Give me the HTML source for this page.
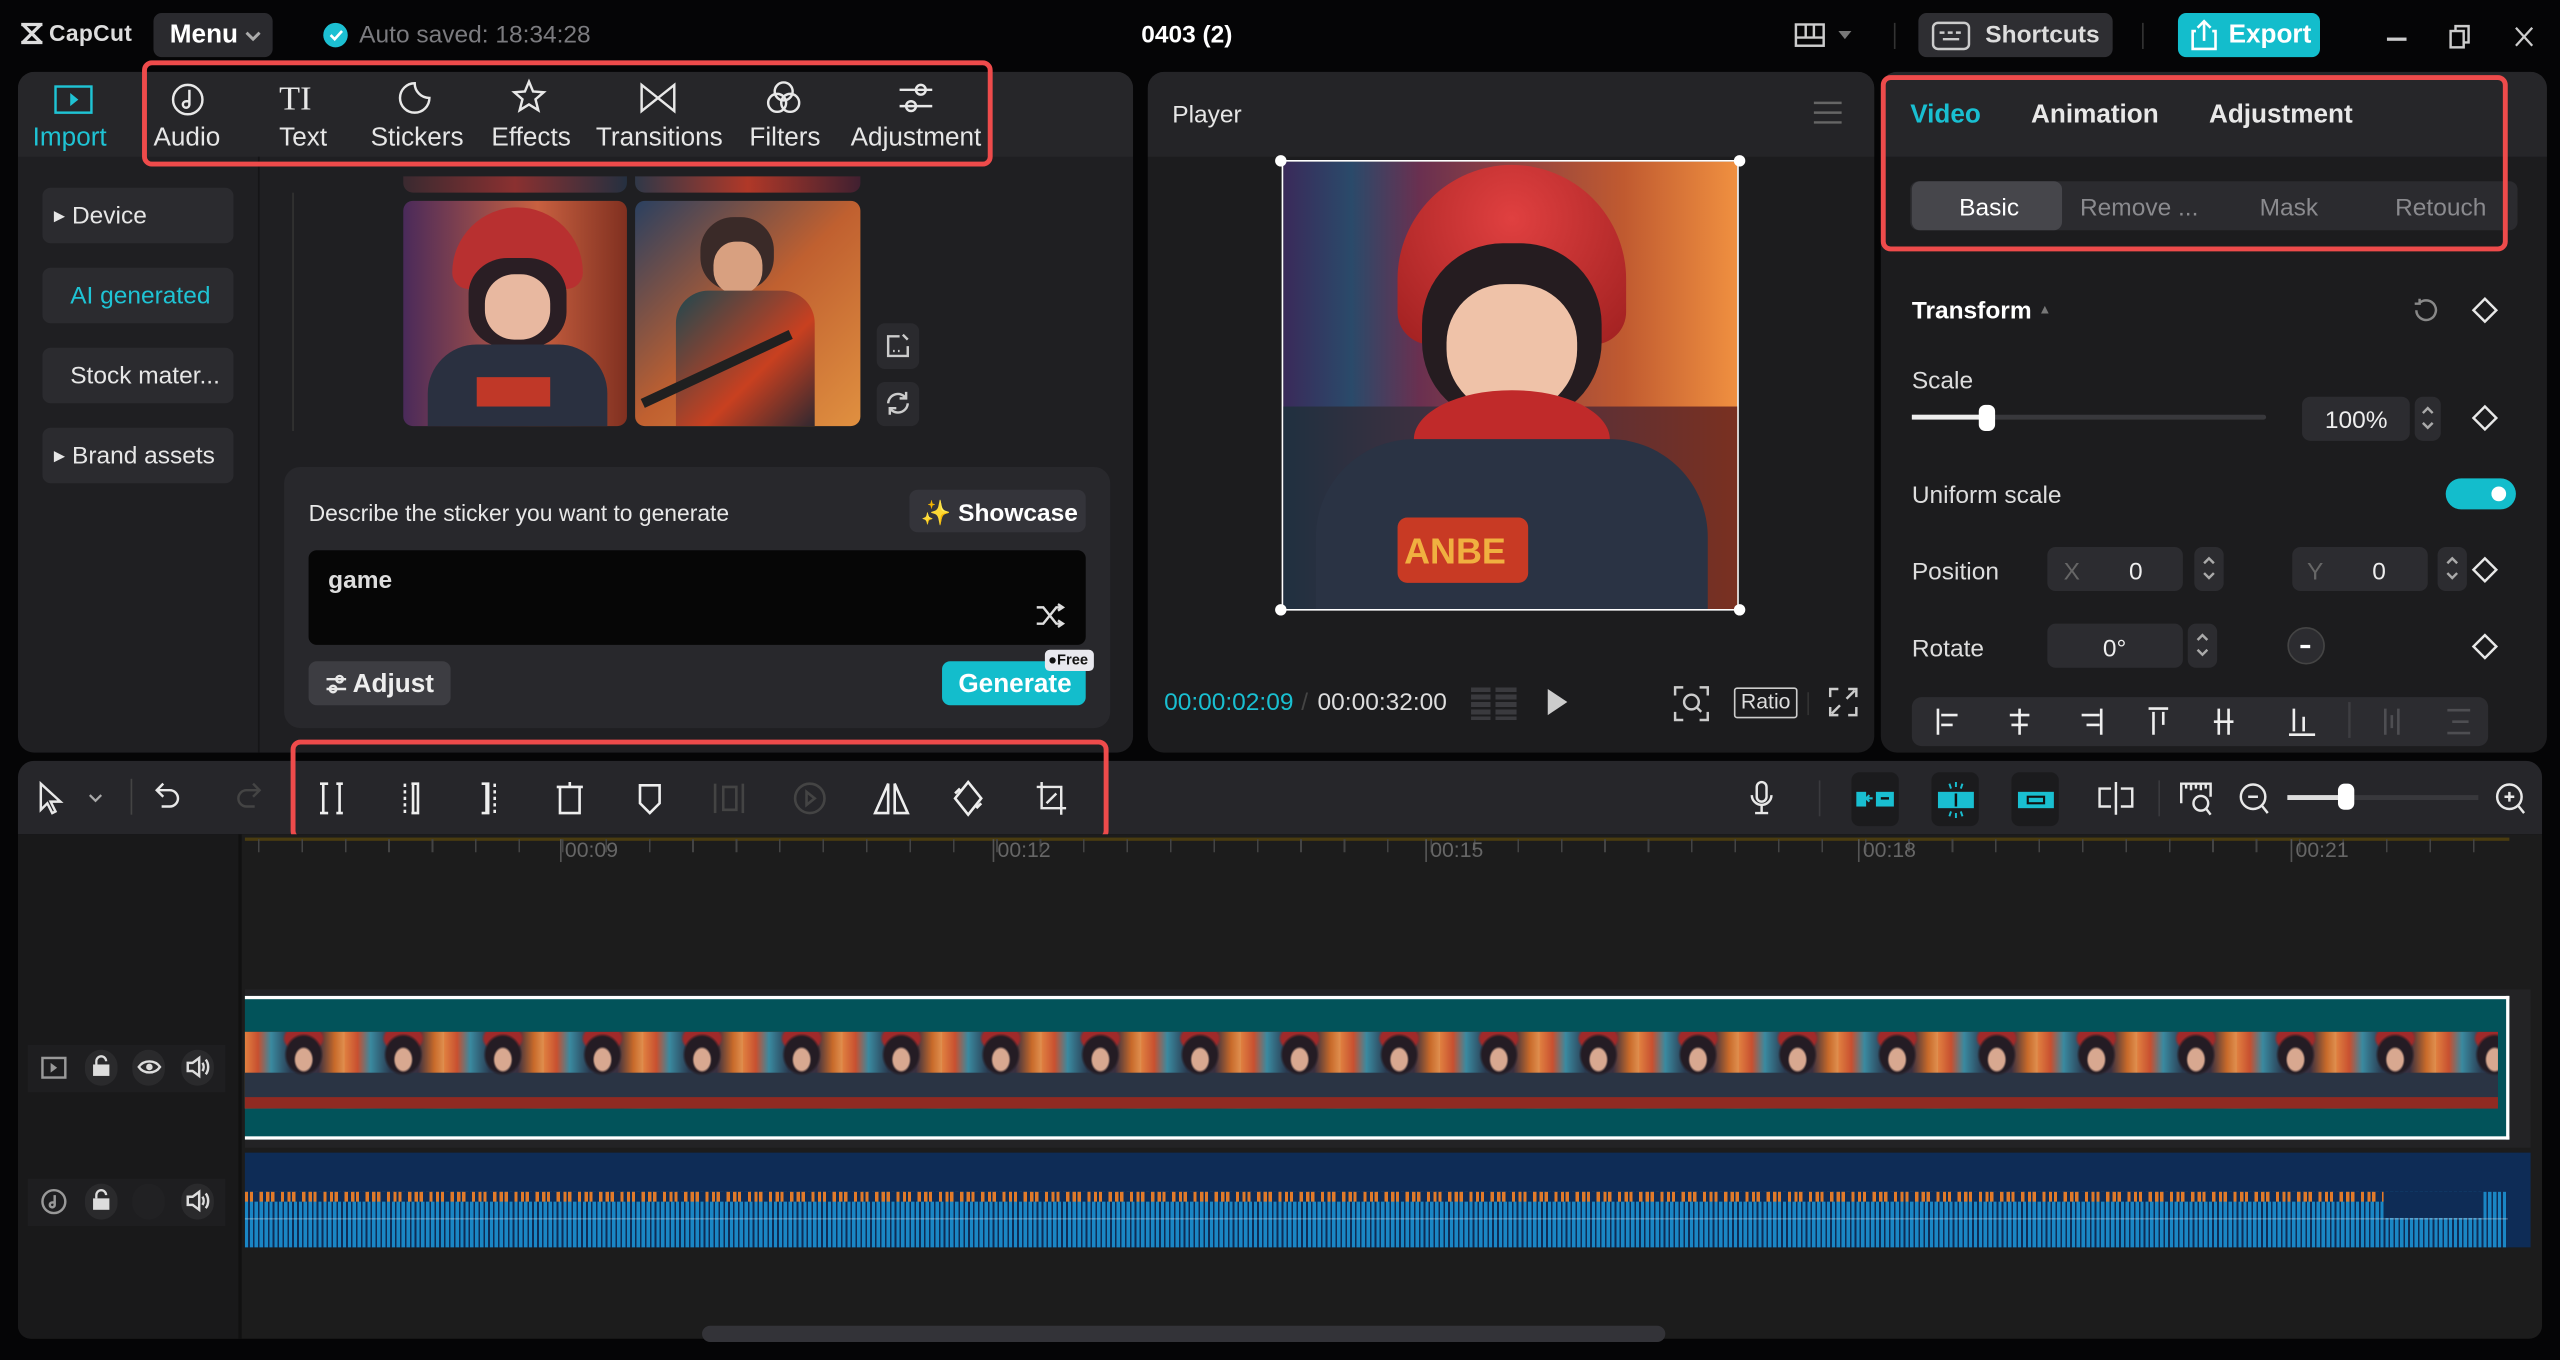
<!DOCTYPE html>
<html><head><meta charset="utf-8"><style>
*{margin:0;padding:0;box-sizing:border-box}
html,body{width:2560px;height:1360px;overflow:hidden;background:#050506}
#s{position:absolute;left:0;top:0;width:1568px;height:833px;transform:scale(1.632653);transform-origin:0 0;font-family:"Liberation Sans",sans-serif;color:#e6e6e6;background:#050506}
.a{position:absolute}
.t{position:absolute;white-space:nowrap}
.red{position:absolute;border:3px solid #ee4b4b;border-radius:6px}
svg{position:absolute;overflow:visible}
.ic{fill:none;stroke-width:1.5}
.ic:not([stroke]){stroke:#e8e8e8}
.btn{position:absolute;background:#2c2c30;border-radius:5px}
</style></head><body><div id="s">

<!-- title bar -->
<svg style="left:12px;top:14px" width="16" height="13" viewBox="0 0 16 13"><path d="M1 1h13M1 12h13M2 1l11 11M13 1L2 12" stroke="#ddd" stroke-width="2" fill="none"/></svg>
<div class="t" style="left:30px;top:12px;font-size:14px;color:#ddd;font-weight:bold;letter-spacing:.2px">CapCut</div>
<div class="btn" style="left:94px;top:8px;width:73px;height:27px;background:#2a2a2e"></div>
<div class="t" style="left:104px;top:13px;font-size:16px;font-weight:bold;color:#fff">Menu</div>
<svg style="left:150px;top:19px" width="10" height="6"><path d="M1 1l4 4 4-4" stroke="#aaa" stroke-width="1.8" fill="none"/></svg>
<div class="a" style="left:198px;top:14px;width:15px;height:15px;border-radius:50%;background:#1cc0d2"></div>
<svg style="left:201px;top:17px" width="10" height="9"><path d="M1.5 4.5l2.5 2.5 4.5-5" stroke="#fff" stroke-width="1.6" fill="none"/></svg>
<div class="t" style="left:220px;top:13px;font-size:15px;color:#7b7b7f">Auto saved: 18:34:28</div>
<div class="t" style="left:699px;top:13px;font-size:15px;font-weight:bold;color:#fff">0403 (2)</div>
<svg style="left:1099px;top:14px" width="20" height="16"><rect x="1" y="1" width="17" height="13" class="ic" stroke="#ccc"/><path d="M1 9h17M7 1v8M12 1v8" class="ic" stroke="#ccc"/></svg>
<svg style="left:1126px;top:19px" width="8" height="6"><path d="M0 0h8L4 5z" fill="#777"/></svg>
<div class="a" style="left:1160px;top:14px;width:1px;height:16px;background:#333"></div>
<div class="btn" style="left:1175px;top:8px;width:119px;height:27px;background:#2e2e32"></div>
<svg style="left:1183px;top:13px" width="24" height="18"><rect x="1" y="1" width="22" height="16" rx="3" class="ic" stroke="#ccc"/><path d="M5 7h3M10 7h3M15 7h3M7 11h10" class="ic" stroke="#ccc"/></svg>
<div class="t" style="left:1216px;top:13px;font-size:15px;color:#ddd;font-weight:bold">Shortcuts</div>
<div class="a" style="left:1312px;top:14px;width:1px;height:16px;background:#333"></div>
<div class="btn" style="left:1334px;top:8px;width:87px;height:27px;background:#13bdcc"></div>
<svg style="left:1342px;top:12px" width="16" height="19"><path d="M3 7H1v11h14V7h-2M8 13V1M4 5l4-4 4 4" stroke="#fff" stroke-width="1.6" fill="none"/></svg>
<div class="t" style="left:1365px;top:13px;font-size:16px;color:#fff;font-weight:bold">Export</div>
<div class="a" style="left:1462px;top:23px;width:12px;height:1.5px;background:#ccc"></div>
<svg style="left:1500px;top:15px" width="14" height="15"><rect x="1" y="4" width="8" height="10" class="ic" stroke="#ccc"/><path d="M4 4V1h8v10H9" class="ic" stroke="#ccc"/></svg>
<svg style="left:1540px;top:16px" width="12" height="13"><path d="M1 1l10 11M11 1L1 12" stroke="#ccc" stroke-width="1.4"/></svg>

<!-- left panel -->
<div class="a" style="left:11px;top:44px;width:683px;height:417px;background:#1f1f22;border-radius:10px;overflow:hidden">
 <div class="a" style="left:0;top:0;width:683px;height:52px;background:#262629"></div>
 <div class="a" style="left:147px;top:52px;width:1px;height:365px;background:#151517"></div>
</div>
<svg style="left:33px;top:52px" width="24" height="19"><rect x="1" y="1" width="22" height="16" class="ic" stroke="#1fc3d4"/><path d="M10 5v8l5-4z" fill="#1fc3d4"/></svg>
<div class="t" style="left:20px;top:76px;font-size:16px;color:#1fc3d4">Import</div>
<svg style="left:103px;top:49px" width="24" height="24"><circle cx="12" cy="12" r="9" class="ic"/><path d="M13 6v9a2 2 0 1 1-2-2h2" class="ic"/></svg>
<div class="t" style="left:94px;top:76px;font-size:16px">Audio</div>
<div class="t" style="left:171px;top:48px;font-size:21px;font-family:'Liberation Serif',serif;color:#e8e8e8">TI</div>
<div class="t" style="left:171px;top:76px;font-size:16px">Text</div>
<svg style="left:243px;top:49px" width="22" height="22"><path d="M11 2a9 9 0 1 0 9 9c-5 0-9-4-9-9z" class="ic"/></svg>
<div class="t" style="left:227px;top:76px;font-size:16px">Stickers</div>
<svg style="left:312px;top:48px" width="24" height="24"><path d="M12 2l2.5 6 6.5.5-5 4.3 1.7 6.7L12 16l-5.7 3.5L8 12.8 3 8.5 9.5 8z" class="ic"/></svg>
<div class="t" style="left:301px;top:76px;font-size:16px">Effects</div>
<svg style="left:391px;top:50px" width="24" height="20"><path d="M2 2v16l10-8zM22 2v16L12 10z" class="ic"/></svg>
<div class="t" style="left:365px;top:76px;font-size:16px">Transitions</div>
<svg style="left:468px;top:48px" width="24" height="24"><circle cx="12" cy="8" r="5.5" class="ic"/><circle cx="8" cy="15" r="5.5" class="ic"/><circle cx="16" cy="15" r="5.5" class="ic"/></svg>
<div class="t" style="left:459px;top:76px;font-size:16px">Filters</div>
<svg style="left:549px;top:48px" width="24" height="24"><path d="M2 7h20M2 17h20" class="ic"/><circle cx="15" cy="7" r="3" fill="#262629" class="ic"/><circle cx="9" cy="17" r="3" fill="#262629" class="ic"/></svg>
<div class="t" style="left:521px;top:76px;font-size:16px">Adjustment</div>
<div class="red" style="left:87px;top:37px;width:521px;height:65px"></div>

<div class="btn" style="left:26px;top:115px;width:117px;height:34px;background:#2b2b2f"></div>
<div class="t" style="left:33px;top:124px;font-size:15px"><span style="font-size:9px;vertical-align:2px">▶</span> Device</div>
<div class="btn" style="left:26px;top:164px;width:117px;height:34px;background:#2b2b2f"></div>
<div class="t" style="left:43px;top:173px;font-size:15px;color:#1fc3d4">AI generated</div>
<div class="btn" style="left:26px;top:213px;width:117px;height:34px;background:#2b2b2f"></div>
<div class="t" style="left:43px;top:222px;font-size:15px">Stock mater...</div>
<div class="btn" style="left:26px;top:262px;width:117px;height:34px;background:#2b2b2f"></div>
<div class="t" style="left:33px;top:271px;font-size:15px"><span style="font-size:9px;vertical-align:2px">▶</span> Brand assets</div>

<div class="a" style="left:179px;top:118px;width:1px;height:146px;background:#333"></div>
<div class="a" style="left:247px;top:108px;width:137px;height:10px;background:linear-gradient(90deg,#3a2a30,#8a3030,#253040);border-radius:0 0 6px 6px"></div>
<div class="a" style="left:389px;top:108px;width:138px;height:10px;background:linear-gradient(90deg,#303848,#b03828,#402030);border-radius:0 0 6px 6px"></div>
<div class="a" style="left:247px;top:123px;width:137px;height:138px;border-radius:6px;overflow:hidden;background:linear-gradient(90deg,#4a2a5a,#c86040 60%,#803020)">
 <div class="a" style="left:30px;top:4px;width:80px;height:50px;border-radius:40px 40px 10px 10px;background:#b83030"></div>
 <div class="a" style="left:40px;top:35px;width:60px;height:55px;border-radius:40%;background:#2a1e24"></div>
 <div class="a" style="left:50px;top:45px;width:40px;height:40px;border-radius:45%;background:#e8b8a0"></div>
 <div class="a" style="left:15px;top:88px;width:110px;height:55px;border-radius:30px 30px 0 0;background:#2a3040"></div>
 <div class="a" style="left:45px;top:108px;width:45px;height:18px;background:#c03828"></div>
</div>
<div class="a" style="left:389px;top:123px;width:138px;height:138px;border-radius:6px;overflow:hidden;background:linear-gradient(135deg,#2a4060,#c06030 50%,#e09040)">
 <div class="a" style="left:40px;top:10px;width:45px;height:45px;border-radius:45%;background:#3a2a28"></div>
 <div class="a" style="left:48px;top:25px;width:30px;height:32px;border-radius:45%;background:#d8a080"></div>
 <div class="a" style="left:25px;top:55px;width:85px;height:83px;border-radius:20px 20px 0 0;background:linear-gradient(135deg,#1e4850,#c84020 60%,#302830)"></div>
 <div class="a" style="left:0;top:100px;width:100px;height:6px;background:#202020;transform:rotate(-25deg)"></div>
</div>
<div class="btn" style="left:537px;top:198px;width:26px;height:28px;background:#2a2a2e"></div>
<svg style="left:542px;top:204px" width="16" height="16"><path d="M14 8v6H2V2h7M11 1l3 3" class="ic" stroke="#ccc"/><path d="M5 11h1M8 11h1" stroke="#ccc" stroke-width="1.4"/></svg>
<div class="btn" style="left:537px;top:234px;width:26px;height:27px;background:#2a2a2e"></div>
<svg style="left:542px;top:239px" width="16" height="16"><path d="M2 8a6 6 0 0 1 11-3M14 8a6 6 0 0 1-11 3M13 1v4H9M3 15v-4h4" class="ic" stroke="#ccc"/></svg>

<div class="a" style="left:174px;top:286px;width:506px;height:160px;background:#28282c;border-radius:10px"></div>
<div class="t" style="left:189px;top:306px;font-size:14px;color:#e8e8e8">Describe the sticker you want to generate</div>
<div class="btn" style="left:557px;top:300px;width:108px;height:26px;background:#34343a"></div>
<div class="t" style="left:564px;top:305px;font-size:15px;font-weight:bold;color:#fff"><span style="color:#f5d142">✨</span> Showcase</div>
<div class="a" style="left:189px;top:337px;width:476px;height:58px;background:#060606;border-radius:5px"></div>
<div class="t" style="left:201px;top:347px;font-size:15px;font-weight:bold;color:#ddd">game</div>
<svg style="left:634px;top:369px" width="18" height="16"><path d="M1 3h4l8 10h4M1 13h4l8-10h4M14 1l3 2-3 2M14 11l3 2-3 2" class="ic" stroke="#ddd"/></svg>
<div class="btn" style="left:189px;top:405px;width:87px;height:27px;background:#3d3d42"></div>
<svg style="left:199px;top:413px" width="14" height="12"><path d="M1 3h12M1 9h12" class="ic"/><circle cx="9" cy="3" r="2" fill="#3d3d42" class="ic"/><circle cx="5" cy="9" r="2" fill="#3d3d42" class="ic"/></svg>
<div class="t" style="left:216px;top:411px;font-size:16px;font-weight:bold;color:#eee">Adjust</div>
<div class="btn" style="left:577px;top:405px;width:88px;height:27px;background:#13bdcc"></div>
<div class="t" style="left:587px;top:411px;font-size:16px;font-weight:bold;color:#fff">Generate</div>
<div class="a" style="left:640px;top:398px;width:30px;height:13px;background:#e8e8ee;border-radius:3px;font-size:9px;color:#111;font-weight:bold;line-height:13px;padding-left:2px">●Free</div>

<!-- player -->
<div class="a" style="left:703px;top:44px;width:445px;height:417px;background:#1c1c1e;border-radius:10px;overflow:hidden">
 <div class="a" style="left:0;top:0;width:445px;height:52px;background:#242427"></div>
</div>
<div class="t" style="left:718px;top:62px;font-size:15px;color:#e6e6e6">Player</div>
<svg style="left:1111px;top:62px" width="17" height="14"><path d="M0 1h17M0 7h17M0 13h17" stroke="#666" stroke-width="1.5"/></svg>
<div class="a" style="left:785px;top:98px;width:280px;height:276px;overflow:hidden;background:linear-gradient(90deg,#3a2a5a 0%,#2a4a6a 15%,#6a3050 30%,#c05a30 75%,#f09040 100%);border:1px solid #fff">
 <div class="a" style="left:0;top:150px;width:280px;height:130px;background:linear-gradient(90deg,#203040,#503040,#7a3020)"></div>
 <div class="a" style="left:70px;top:2px;width:140px;height:110px;border-radius:70px 70px 20px 20px;background:radial-gradient(circle at 50% 30%,#e04040,#a02020)"></div>
 <div class="a" style="left:85px;top:50px;width:110px;height:110px;border-radius:45%;background:#251c20"></div>
 <div class="a" style="left:100px;top:75px;width:80px;height:80px;border-radius:45% 45% 50% 50%;background:#efc2a8"></div>
 <div class="a" style="left:80px;top:140px;width:120px;height:60px;border-radius:50% 50% 0 0;background:#c02a2a"></div>
 <div class="a" style="left:20px;top:170px;width:240px;height:110px;border-radius:60px 60px 0 0;background:#2a3344"></div>
 <div class="a" style="left:70px;top:218px;width:80px;height:40px;background:#c83a24;border-radius:6px"></div>
 <div class="t" style="left:74px;top:226px;font-size:22px;font-weight:bold;color:#f0b040">ANBE</div>
</div>
<div class="a" style="left:781px;top:95px;width:7px;height:7px;background:#fff;border-radius:50%"></div>
<div class="a" style="left:1062px;top:95px;width:7px;height:7px;background:#fff;border-radius:50%"></div>
<div class="a" style="left:781px;top:370px;width:7px;height:7px;background:#fff;border-radius:50%"></div>
<div class="a" style="left:1062px;top:370px;width:7px;height:7px;background:#fff;border-radius:50%"></div>
<div class="t" style="left:713px;top:422px;font-size:15px;color:#19bfd1">00:00:02:09</div>
<div class="t" style="left:797px;top:422px;font-size:15px;color:#444">/</div>
<div class="t" style="left:807px;top:422px;font-size:15px;color:#ddd">00:00:32:00</div>
<div class="a" style="left:901px;top:421px;width:28px;height:20px;background:repeating-linear-gradient(180deg,#3a3a3e 0 3px,transparent 3px 4.5px);-webkit-mask:linear-gradient(90deg,#000 0 12px,transparent 12px 15px,#000 15px)"></div>
<svg style="left:948px;top:422px" width="12" height="16"><path d="M0 0l12 8-12 8z" fill="#ccc"/></svg>
<svg style="left:1025px;top:420px" width="22" height="22"><path d="M1 6V1h5M16 1h5v5M21 16v5h-5M6 21H1v-5" class="ic" stroke="#ccc"/><circle cx="11" cy="10" r="4.5" class="ic" stroke="#ccc"/><path d="M14 13l3 3" class="ic" stroke="#ccc"/></svg>
<div class="a" style="left:1062px;top:421px;width:39px;height:19px;border:1.5px solid #ccc;border-radius:2px;font-size:13px;color:#ddd;text-align:center;line-height:16px">Ratio</div>
<div class="a" style="left:1107px;top:424px;width:1px;height:14px;background:#333"></div>
<svg style="left:1120px;top:421px" width="18" height="18"><path d="M1 6V1h5M12 1h5v5M17 12v5h-5M6 17H1v-5M16 2l-5 5M2 16l5-5" class="ic" stroke="#ccc"/></svg>

<!-- right panel -->
<div class="a" style="left:1152px;top:44px;width:408px;height:417px;background:#1c1c1e;border-radius:10px;overflow:hidden">
 <div class="a" style="left:0;top:0;width:408px;height:52px;background:#262629"></div>
</div>
<div class="t" style="left:1170px;top:62px;font-size:16px;font-weight:bold;color:#19bfd1">Video</div>
<div class="t" style="left:1244px;top:62px;font-size:16px;font-weight:bold;color:#e8e8e8">Animation</div>
<div class="t" style="left:1353px;top:62px;font-size:16px;font-weight:bold;color:#e8e8e8">Adjustment</div>
<div class="a" style="left:1170px;top:111px;width:372px;height:30px;background:#2b2b2f;border-radius:5px"></div>
<div class="a" style="left:1171px;top:111px;width:92px;height:30px;background:#46464b;border-radius:5px"></div>
<div class="t" style="left:1200px;top:119px;font-size:15px;color:#fff">Basic</div>
<div class="t" style="left:1274px;top:119px;font-size:15px;color:#8a8a8e">Remove ...</div>
<div class="t" style="left:1384px;top:119px;font-size:15px;color:#8a8a8e">Mask</div>
<div class="t" style="left:1467px;top:119px;font-size:15px;color:#8a8a8e">Retouch</div>
<div class="red" style="left:1152px;top:46px;width:384px;height:108px"></div>
<div class="t" style="left:1171px;top:182px;font-size:15px;font-weight:bold;color:#fff">Transform <span style="font-size:8px;color:#777;vertical-align:3px">▲</span></div>
<svg style="left:1477px;top:182px" width="16" height="16"><path d="M3 8a6 6 0 1 0 2-4.5M5 1v3H2" class="ic" stroke="#888"/></svg>
<svg style="left:1514px;top:182px" width="16" height="16"><path d="M8 1l7 7-7 7-7-7z" class="ic"/></svg>
<div class="t" style="left:1171px;top:225px;font-size:15px;color:#ddd">Scale</div>
<div class="a" style="left:1171px;top:254px;width:217px;height:3px;background:#38383c;border-radius:2px"></div>
<div class="a" style="left:1171px;top:254px;width:46px;height:3px;background:#eee"></div>
<div class="a" style="left:1212px;top:248px;width:10px;height:16px;background:#fff;border-radius:4px"></div>
<div class="btn" style="left:1410px;top:243px;width:66px;height:27px;background:#2c2c30"></div>
<div class="t" style="left:1424px;top:249px;font-size:15px;color:#eee">100%</div>
<div class="btn" style="left:1479px;top:243px;width:16px;height:27px;background:#2c2c30"></div>
<svg style="left:1482px;top:248px" width="10" height="16"><path d="M2 5l3-3 3 3M2 11l3 3 3-3" class="ic" stroke="#aaa"/></svg>
<svg style="left:1514px;top:248px" width="16" height="16"><path d="M8 1l7 7-7 7-7-7z" class="ic"/></svg>
<div class="t" style="left:1171px;top:295px;font-size:15px;color:#ddd">Uniform scale</div>
<div class="a" style="left:1498px;top:293px;width:43px;height:19px;background:#13bdcc;border-radius:10px"></div>
<div class="a" style="left:1526px;top:298px;width:9px;height:9px;background:#fff;border-radius:50%"></div>
<div class="t" style="left:1171px;top:342px;font-size:15px;color:#ddd">Position</div>
<div class="btn" style="left:1254px;top:335px;width:83px;height:27px"></div>
<div class="t" style="left:1264px;top:342px;font-size:15px;color:#666">X</div>
<div class="t" style="left:1304px;top:342px;font-size:15px;color:#eee">0</div>
<div class="btn" style="left:1344px;top:335px;width:18px;height:27px"></div>
<svg style="left:1348px;top:340px" width="10" height="16"><path d="M2 5l3-3 3 3M2 11l3 3 3-3" class="ic" stroke="#aaa"/></svg>
<div class="btn" style="left:1404px;top:335px;width:83px;height:27px"></div>
<div class="t" style="left:1413px;top:342px;font-size:15px;color:#666">Y</div>
<div class="t" style="left:1453px;top:342px;font-size:15px;color:#eee">0</div>
<div class="btn" style="left:1493px;top:335px;width:18px;height:27px"></div>
<svg style="left:1497px;top:340px" width="10" height="16"><path d="M2 5l3-3 3 3M2 11l3 3 3-3" class="ic" stroke="#aaa"/></svg>
<svg style="left:1514px;top:341px" width="16" height="16"><path d="M8 1l7 7-7 7-7-7z" class="ic"/></svg>
<div class="t" style="left:1171px;top:389px;font-size:15px;color:#ddd">Rotate</div>
<div class="btn" style="left:1254px;top:382px;width:83px;height:27px"></div>
<div class="t" style="left:1288px;top:389px;font-size:15px;color:#eee">0°</div>
<div class="btn" style="left:1340px;top:382px;width:18px;height:27px"></div>
<svg style="left:1344px;top:387px" width="10" height="16"><path d="M2 5l3-3 3 3M2 11l3 3 3-3" class="ic" stroke="#aaa"/></svg>
<div class="a" style="left:1401px;top:384px;width:23px;height:23px;border-radius:50%;background:#2c2c30;border:1px solid #444"></div>
<div class="a" style="left:1409px;top:395px;width:6px;height:2px;background:#fff"></div>
<svg style="left:1514px;top:388px" width="16" height="16"><path d="M8 1l7 7-7 7-7-7z" class="ic"/></svg>
<div class="a" style="left:1171px;top:427px;width:353px;height:30px;background:#2c2c30;border-radius:6px"></div>
<svg style="left:1185px;top:433px" width="340" height="18">
 <g stroke="#eee" stroke-width="1.6" fill="none">
 <path d="M2 1v16M4 5h10M4 11h7"/>
 <path d="M52 1v16M46 5h12M47 11h10"/>
 <path d="M102 1v16M90 5h11M93 11h8"/>
 <path d="M131 1h12M134 3v14M140 3v8"/>
 <path d="M174 1v16M180 1v16M171 9h12"/>
 <path d="M217 17h16M220 1v14M226 6v9"/>
 </g>
 <path d="M254 -3v22" stroke="#3e3e42" stroke-width="1.5"/>
 <g stroke="#4e4e52" stroke-width="1.6" fill="none"><path d="M276 1v16M284 1v16M280 5v8"/><path d="M314 2h14M317 9h10M314 16h14"/></g>
</svg>

<!-- timeline toolbar -->
<div class="a" style="left:11px;top:466px;width:1546px;height:45px;background:#26262a;border-radius:10px 10px 0 0"></div>
<svg style="left:23px;top:479px" width="16" height="20"><path d="M2 1v16l4-4 3 6 2-1-3-6h6z" class="ic"/></svg>
<svg style="left:54px;top:486px" width="9" height="6"><path d="M1 1l3.5 3.5L8 1" stroke="#aaa" stroke-width="1.4" fill="none"/></svg>
<div class="a" style="left:80px;top:477px;width:1px;height:22px;background:#444"></div>
<svg style="left:95px;top:479px" width="16" height="18"><path d="M5 1L1 5l4 4M1 5h8a5 5 0 0 1 0 10H4" class="ic"/></svg>
<svg style="left:144px;top:479px" width="16" height="18"><path d="M11 1l4 4-4 4M15 5H7a5 5 0 0 0 0 10h5" class="ic" stroke="#444"/></svg>
<svg style="left:193px;top:478px" width="400" height="24">
 <g stroke="#eee" stroke-width="1.6" fill="none">
 <path d="M3 2h5M3 20h5M5 2v18M13 2h4M13 20h4M15 2v18"/>
 <path d="M55 2v18" stroke-dasharray="2 2"/><path d="M59 2h4v18h-4M60 2v18"/>
 <path d="M110 2v18" stroke-dasharray="2 2"/><path d="M102 2h4v18h-4M105 2v18"/>
 <path d="M150 4h12v16h-12zM148 4h16M156 1v3"/>
 <path d="M199 3h12v11l-6 6-6-6z"/>
 <path d="M245 2v18" stroke="#444"/><path d="M250 4h8v14h-8z" stroke="#444"/><path d="M262 2v18" stroke="#444"/>
 <circle cx="303" cy="11" r="9" stroke="#444"/><path d="M301 7l5 4-5 4z" stroke="#444"/>
 <path d="M351 2v18h-8zM355 2v18h8z"/>
 <path d="M400 1l8 10-8 10-8-10z M392 8l3-3M408 14l-3 3"/>
 </g>
</svg>
<svg style="left:634px;top:478px" width="20" height="22"><path d="M4 1v16h15M1 4h15v17M7 14l6-6" class="ic" stroke-width="1.8"/></svg>
<div class="red" style="left:178px;top:453px;width:501px;height:62px"></div>

<svg style="left:1072px;top:478px" width="14" height="22"><rect x="4" y="1" width="6" height="12" rx="3" class="ic"/><path d="M1 9a6 6 0 0 0 12 0M7 15v5M3 20h8" class="ic"/></svg>
<div class="a" style="left:1114px;top:478px;width:1px;height:22px;background:#3a3a3e"></div>
<div class="a" style="left:1134px;top:473px;width:29px;height:33px;background:#1b1b1d;border-radius:5px"></div>
<div class="a" style="left:1183px;top:473px;width:29px;height:33px;background:#1b1b1d;border-radius:5px"></div>
<div class="a" style="left:1232px;top:473px;width:29px;height:33px;background:#1b1b1d;border-radius:5px"></div>
<svg style="left:1137px;top:480px" width="24" height="20"><rect x="0" y="5" width="6" height="9" fill="#19bfd1"/><rect x="12" y="5" width="11" height="9" fill="#19bfd1"/><path d="M10 9H7M8 7l-2 2 2 2" stroke="#19bfd1" stroke-width="1.3" fill="none"/><path d="M15 9h5" stroke="#111" stroke-width="1.5"/></svg>
<svg style="left:1186px;top:478px" width="24" height="24"><rect x="1" y="7" width="22" height="10" fill="#19bfd1"/><path d="M12 8v8" stroke="#111" stroke-width="1.5"/><path d="M12 1v3M8 2l1 3M16 2l-1 3M12 20v3M8 22l1-3M16 22l-1-3" stroke="#19bfd1" stroke-width="1.2"/></svg>
<svg style="left:1235px;top:480px" width="24" height="20"><rect x="1" y="5" width="22" height="10" fill="#19bfd1"/><rect x="7" y="8" width="10" height="4" fill="none" stroke="#111" stroke-width="1.3"/></svg>
<svg style="left:1285px;top:478px" width="22" height="22"><path d="M11 1v20M8 5H1v11h7M14 5h7v11h-7" class="ic"/></svg>
<div class="a" style="left:1322px;top:478px;width:1px;height:22px;background:#3a3a3e"></div>
<svg style="left:1335px;top:478px" width="22" height="22"><path d="M1 14V2h18v8M4 2v3M7 2v4M10 2v3M13 2v4M16 2v3" class="ic"/><circle cx="13" cy="14" r="4.5" class="ic"/><path d="M16 17l3 4" class="ic"/></svg>
<svg style="left:1371px;top:479px" width="20" height="22"><circle cx="9" cy="9" r="7.5" class="ic"/><path d="M6 9h6M14 14l4 5" class="ic"/></svg>
<div class="a" style="left:1401px;top:487px;width:117px;height:3px;background:#38383c"></div>
<div class="a" style="left:1401px;top:487px;width:36px;height:3px;background:#ddd"></div>
<div class="a" style="left:1432px;top:480px;width:10px;height:16px;background:#fff;border-radius:4px"></div>
<svg style="left:1528px;top:479px" width="20" height="22"><circle cx="9" cy="9" r="7.5" class="ic"/><path d="M6 9h6M9 6v6M14 14l4 5" class="ic"/></svg>

<!-- timeline body -->
<div class="a" style="left:11px;top:511px;width:1546px;height:309px;background:#1c1c1c;border-radius:0 0 8px 8px;overflow:hidden">
 <div class="a" style="left:0;top:0;width:137px;height:309px;background:#19191a;border-right:2px solid #111"></div>
 <div class="a" style="left:139px;top:2px;width:1387px;height:2px;background:#4a3c10"></div>
</div>
<div class="a" style="left:158px;top:514px;width:1380px;height:8px;background:repeating-linear-gradient(90deg,#444 0 1px,transparent 1px 26.6px)"></div>
<div class="a" style="left:343px;top:514px;width:1px;height:14px;background:#555"></div>
<div class="t" style="left:346px;top:513px;font-size:13px;color:#666">00:09</div>
<div class="a" style="left:608px;top:514px;width:1px;height:14px;background:#555"></div>
<div class="t" style="left:611px;top:513px;font-size:13px;color:#666">00:12</div>
<div class="a" style="left:873px;top:514px;width:1px;height:14px;background:#555"></div>
<div class="t" style="left:876px;top:513px;font-size:13px;color:#666">00:15</div>
<div class="a" style="left:1138px;top:514px;width:1px;height:14px;background:#555"></div>
<div class="t" style="left:1141px;top:513px;font-size:13px;color:#666">00:18</div>
<div class="a" style="left:1403px;top:514px;width:1px;height:14px;background:#555"></div>
<div class="t" style="left:1406px;top:513px;font-size:13px;color:#666">00:21</div>

<div class="a" style="left:150px;top:606px;width:1400px;height:97px;background:#232325"></div>
<div class="a" style="left:150px;top:610px;width:1387px;height:88px;background:#02535a;border:2px solid #fff;border-left:none"></div>
<div class="a" style="left:150px;top:632px;width:1380px;height:47px;background:
 radial-gradient(ellipse 6px 8px at 36px 17px,#d8a890 80%,transparent 100%) 0 0/61px 47px,
 radial-gradient(ellipse 12px 13px at 36px 14px,#241c24 85%,transparent 100%) 0 0/61px 47px,
 radial-gradient(ellipse 13px 9px at 36px 4px,#a02a2a 85%,transparent 100%) 0 0/61px 47px,
 linear-gradient(180deg,transparent 25px,#2a3444 25px,#2a3444 40px,#902a22 40px) 0 0/61px 47px,
 linear-gradient(90deg,#e08040 0,#c85030 8px,#3a8aa0 16px,#2a3a50 28px,#3a3040 45px,#c86a2a 55px,#e09050 61px) 0 0/61px 47px"></div>
<div class="a" style="left:150px;top:706px;width:1400px;height:58px;background:#0e2c56"></div>
<div class="a" style="left:150px;top:730px;width:1386px;height:34px;background:repeating-linear-gradient(90deg,#1a86c4 0 2px,#0e2c56 2px 3px)"></div>
<div class="a" style="left:150px;top:730px;width:1310px;height:6px;background:repeating-linear-gradient(90deg,#e07a2a 0 2px,#0e2c56 2px 3px,#e07a2a 3px 5px,#0e2c56 5px 7px,#0e2c56 7px 9px,#e07a2a 9px 11px,#0e2c56 11px 13px)"></div>
<div class="a" style="left:150px;top:746px;width:1386px;height:1px;background:rgba(255,255,255,.25)"></div>
<div class="a" style="left:1460px;top:730px;width:60px;height:16px;background:#0e2c56"></div>

<div class="a" style="left:17px;top:640px;width:121px;height:29px;background:#1e1e20"></div>
<svg style="left:25px;top:647px" width="16" height="14"><rect x="1" y="1" width="14" height="12" class="ic" stroke="#999"/><path d="M6 4v6l4-3z" fill="#999"/></svg>
<div class="a" style="left:52px;top:643px;width:20px;height:22px;background:#2a2a2c;border-radius:10px"></div>
<svg style="left:56px;top:646px" width="12" height="14"><rect x="1" y="6" width="10" height="7" fill="#ddd"/><path d="M3 6V4a3 3 0 0 1 6 0" stroke="#ddd" stroke-width="1.4" fill="none"/></svg>
<div class="a" style="left:81px;top:643px;width:20px;height:22px;background:#2a2a2c;border-radius:10px"></div>
<svg style="left:84px;top:648px" width="15" height="11"><path d="M1 5.5C4 1 11 1 14 5.5 11 10 4 10 1 5.5z" class="ic" stroke="#ddd"/><circle cx="7.5" cy="5.5" r="2" fill="#ddd"/></svg>
<div class="a" style="left:111px;top:643px;width:20px;height:22px;background:#2a2a2c;border-radius:10px"></div>
<svg style="left:114px;top:647px" width="14" height="13"><path d="M1 4h3l4-3v11L4 9H1z" class="ic" stroke="#ddd"/><path d="M10 4c1 1.5 1 3.5 0 5M12 2c2 2.5 2 6.5 0 9" class="ic" stroke="#ddd" stroke-width="1.2"/></svg>
<div class="a" style="left:17px;top:722px;width:121px;height:29px;background:#1e1e20"></div>
<svg style="left:25px;top:728px" width="16" height="16"><circle cx="8" cy="8" r="7" class="ic" stroke="#999"/><path d="M8.5 4v6a1.5 1.5 0 1 1-1.5-1.5h1.5" class="ic" stroke="#999"/></svg>
<div class="a" style="left:52px;top:725px;width:20px;height:22px;background:#2a2a2c;border-radius:10px"></div>
<svg style="left:56px;top:728px" width="12" height="14"><rect x="1" y="6" width="10" height="7" fill="#ddd"/><path d="M3 6V4a3 3 0 0 1 6 0" stroke="#ddd" stroke-width="1.4" fill="none"/></svg>
<div class="a" style="left:81px;top:725px;width:20px;height:22px;background:#212123;border-radius:10px"></div>
<div class="a" style="left:111px;top:725px;width:20px;height:22px;background:#2a2a2c;border-radius:10px"></div>
<svg style="left:114px;top:729px" width="14" height="13"><path d="M1 4h3l4-3v11L4 9H1z" class="ic" stroke="#ddd"/><path d="M10 4c1 1.5 1 3.5 0 5M12 2c2 2.5 2 6.5 0 9" class="ic" stroke="#ddd" stroke-width="1.2"/></svg>

<div class="a" style="left:430px;top:812px;width:590px;height:10px;background:#333338;border-radius:5px"></div>
</div></body></html>
